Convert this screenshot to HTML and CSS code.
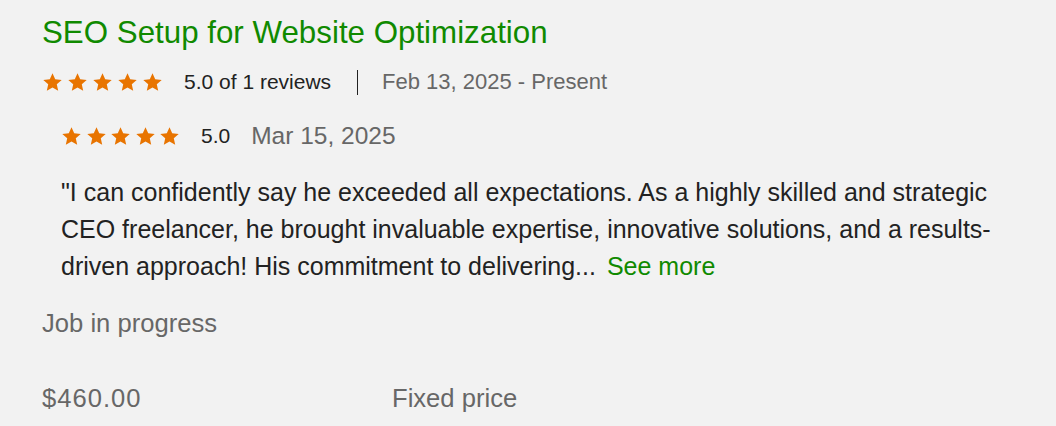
FILE: index.html
```html
<!doctype html>
<html>
  <head>
    <link rel="stylesheet" href="styles.css">
  </head>
  <body>
    <div class="job">
      <h3 class="job-title">SEO Setup for Website Optimization</h3>

      <div class="job-meta">
        <div class="stars">
          <svg viewBox="0 0 24 24"><path d="M12 1.5l3.1 6.9 7.4.7-5.6 5 1.6 7.4L12 17.7l-6.5 3.8 1.6-7.4-5.6-5 7.4-.7z"/></svg>
          <svg viewBox="0 0 24 24"><path d="M12 1.5l3.1 6.9 7.4.7-5.6 5 1.6 7.4L12 17.7l-6.5 3.8 1.6-7.4-5.6-5 7.4-.7z"/></svg>
          <svg viewBox="0 0 24 24"><path d="M12 1.5l3.1 6.9 7.4.7-5.6 5 1.6 7.4L12 17.7l-6.5 3.8 1.6-7.4-5.6-5 7.4-.7z"/></svg>
          <svg viewBox="0 0 24 24"><path d="M12 1.5l3.1 6.9 7.4.7-5.6 5 1.6 7.4L12 17.7l-6.5 3.8 1.6-7.4-5.6-5 7.4-.7z"/></svg>
          <svg viewBox="0 0 24 24"><path d="M12 1.5l3.1 6.9 7.4.7-5.6 5 1.6 7.4L12 17.7l-6.5 3.8 1.6-7.4-5.6-5 7.4-.7z"/></svg>
        </div>
        <span class="score">5.0 of 1 reviews</span>
        <span class="divider"></span>
        <span class="period">Feb 13, 2025 - Present</span>
      </div>

      <div class="review">
        <div class="review-head">
          <div class="stars">
            <svg viewBox="0 0 24 24"><path d="M12 1.5l3.1 6.9 7.4.7-5.6 5 1.6 7.4L12 17.7l-6.5 3.8 1.6-7.4-5.6-5 7.4-.7z"/></svg>
            <svg viewBox="0 0 24 24"><path d="M12 1.5l3.1 6.9 7.4.7-5.6 5 1.6 7.4L12 17.7l-6.5 3.8 1.6-7.4-5.6-5 7.4-.7z"/></svg>
            <svg viewBox="0 0 24 24"><path d="M12 1.5l3.1 6.9 7.4.7-5.6 5 1.6 7.4L12 17.7l-6.5 3.8 1.6-7.4-5.6-5 7.4-.7z"/></svg>
            <svg viewBox="0 0 24 24"><path d="M12 1.5l3.1 6.9 7.4.7-5.6 5 1.6 7.4L12 17.7l-6.5 3.8 1.6-7.4-5.6-5 7.4-.7z"/></svg>
            <svg viewBox="0 0 24 24"><path d="M12 1.5l3.1 6.9 7.4.7-5.6 5 1.6 7.4L12 17.7l-6.5 3.8 1.6-7.4-5.6-5 7.4-.7z"/></svg>
          </div>
          <span class="review-score">5.0</span>
          <span class="review-date">Mar 15, 2025</span>
        </div>
        <p class="review-text"><span>"I can confidently say he exceeded all expectations. As a highly skilled and strategic CEO freelancer, he brought invaluable expertise, innovative solutions, and a results-driven approach! His commitment to delivering...</span> <a class="see-more" href="#">See more</a></p>
      </div>

      <div class="status">Job in progress</div>

      <div class="terms">
        <span class="amount">$460.00</span>
        <span class="type">Fixed price</span>
      </div>
    </div>
  </body>
</html>
```

FILE: styles.css
```css
body {
  margin: 0;
  background-color: #f2f2f2;
  font-family: "Liberation Sans", Arial, sans-serif;
  color: #222;
}

.job {
  padding: 13px 42px 0 42px;
}

.job-title {
  margin: 0;
  font-size: 31.3px;
  font-weight: normal;
  color: #108a00;
  line-height: 40px;
}

.job-meta {
  display: flex;
  align-items: center;
  height: 30px;
  margin-top: 14px;
}

.stars {
  display: flex;
  gap: 4px;
}

.stars svg {
  width: 21px;
  height: 21px;
  fill: #e87400;
}

.score {
  margin-left: 21px;
  font-size: 21px;
  color: #222;
}

.divider {
  width: 1px;
  height: 25px;
  background-color: #222;
  margin: 0 24px 0 26px;
}

.period {
  font-size: 22px;
  color: #676767;
}

.review {
  padding-left: 19px;
}

.review-head {
  display: flex;
  align-items: center;
  height: 32px;
  margin-top: 23px;
}

.review-head .stars {
  gap: 3.5px;
}

.review-score {
  margin-left: 21px;
  font-size: 21px;
  color: #222;
}

.review-date {
  margin-left: 21px;
  font-size: 24.5px;
  color: #676767;
}

.review-text {
  margin: 22px 0 0 0;
  font-size: 25px;
  line-height: 37px;
  color: #222;
  max-width: 945px;
}

.see-more {
  margin-left: 4px;
  color: #108a00;
  text-decoration: none;
}

.status {
  margin-top: 24px;
  font-size: 25.6px;
  color: #676767;
}

.terms {
  display: flex;
  margin-top: 46px;
  font-size: 25.6px;
  color: #676767;
}

.amount {
  width: 350px;
  letter-spacing: 1px;
}
```
